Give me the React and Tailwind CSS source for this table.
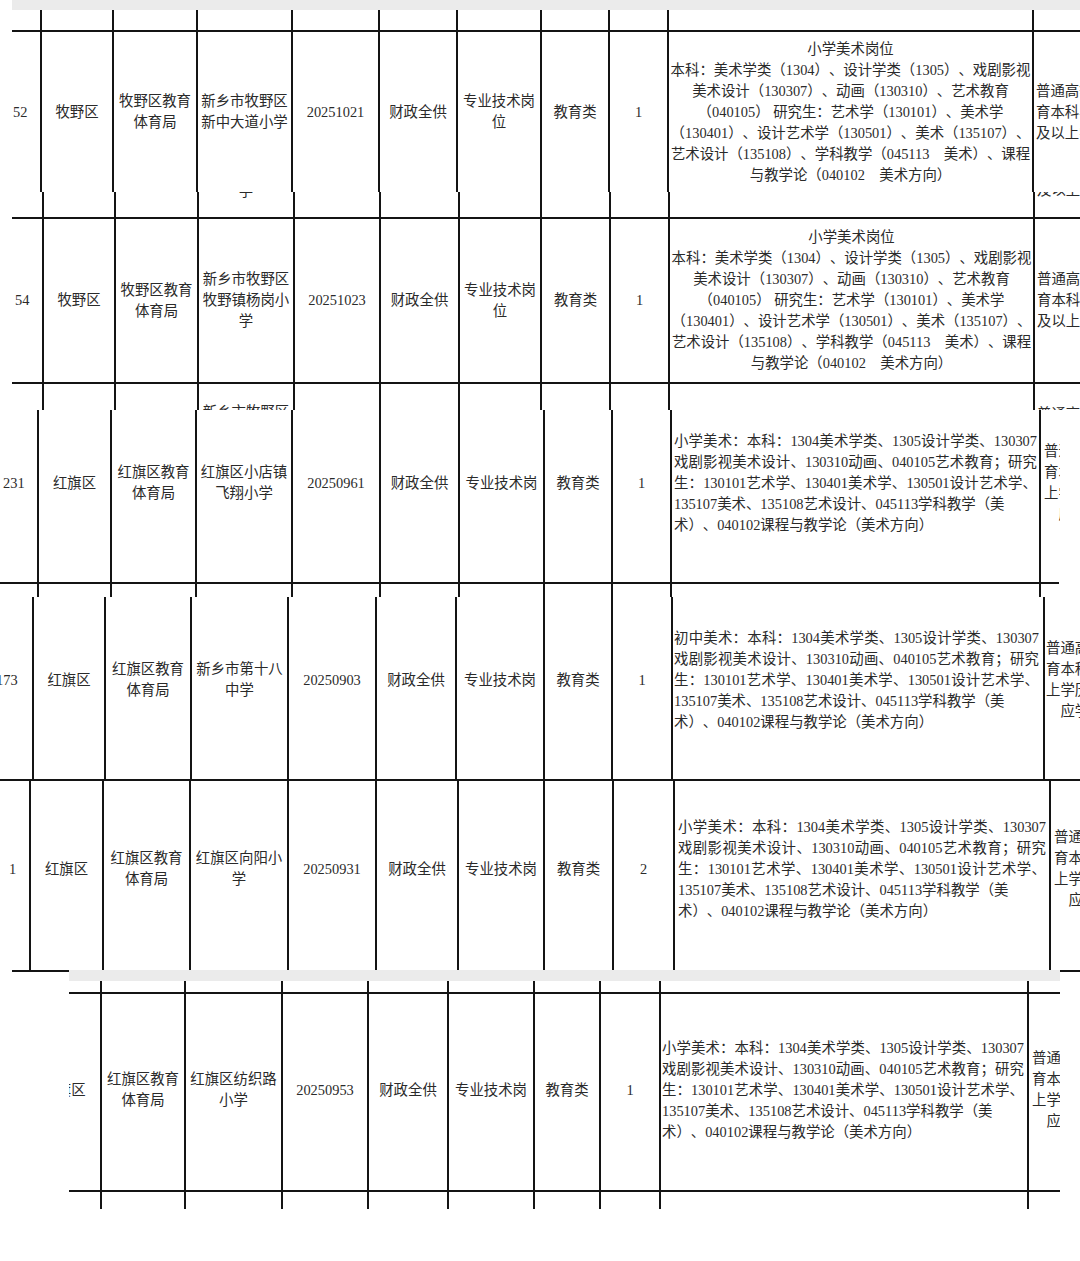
const LINE = "border-[#141414]";
const B = "border-l-2 border-[#141414]";

// column tracks per pasted strip (each strip of the collage is shifted a little)
const C1 = "grid-cols-[28px_72px_84px_95px_87px_78px_84px_68px_59px_365px_100px]";
const C2 = "grid-cols-[30px_72px_83px_96px_86px_79px_82px_69px_59px_365px_100px]";
const C3 = "grid-cols-[37px_73px_85px_96px_88px_79px_85px_68px_59px_369px_100px]";
const C4 = "grid-cols-[32px_72px_86px_97px_88px_80px_88px_68px_60px_372px_100px]";
const C5 = "grid-cols-[17px_73px_87px_98px_88px_82px_86px_69px_61px_376px_100px]";
const C6 = "grid-cols-[72px_84px_97px_86px_80px_86px_66px_60px_368px_100px]";

function HLine({ className = "" }) {
  return <div className={`h-[2px] bg-[#141414] ${className}`} />;
}

function Stubs({ cols, n = 11, className = "", first = false, fill = {} }) {
  return (
    <div className={`grid ${cols} ${className}`}>
      {Array.from({ length: n }).map((_, i) => (
        <div key={i} className={`h-full overflow-hidden ${i === 0 && !first ? "" : B}`}>
          {fill[i]}
        </div>
      ))}
    </div>
  );
}

function Row({ cols, className = "", pb = "", cells, first = false }) {
  return (
    <div className={`grid ${cols} ${className}`}>
      {cells.map((c, i) => (
        <div
          key={i}
          className={`flex items-center ${pb} ${i === 0 && !first ? "" : B} ${
            c.align ?? "justify-center text-center"
          } ${i === 0 ? "" : "overflow-hidden"}`}
        >
          {c.body}
        </div>
      ))}
    </div>
  );
}

function Lines({ lines, className = "" }) {
  return (
    <div className={className}>
      {lines.map((l, i) => (
        <div key={i}>{l}</div>
      ))}
    </div>
  );
}

function DescCenter() {
  const lines = [
    "小学美术岗位",
    "本科：美术学类（1304）、设计学类（1305）、戏剧影视",
    "美术设计（130307）、动画（130310）、艺术教育",
    "（040105） 研究生：艺术学（130101）、美术学",
    "（130401）、设计艺术学（130501）、美术（135107）、",
    "艺术设计（135108）、学科教学（045113　美术）、课程",
    "与教学论（040102　美术方向）",
  ];
  return <Lines lines={lines} className="w-full text-center whitespace-nowrap" />;
}

function DescLeft({ title, w }) {
  const lines = [
    `${title}：本科：1304美术学类、1305设计学类、130307`,
    "戏剧影视美术设计、130310动画、040105艺术教育；研究",
    "生：130101艺术学、130401美术学、130501设计艺术学、",
    "135107美术、135108艺术设计、045113学科教学（美",
    "术）、040102课程与教学论（美术方向）",
  ];
  return (
    <div className={`${w} shrink-0 text-left`}>
      {lines.map((l, i) => (
        <div key={i} className={i < 3 ? "[text-align-last:justify]" : "whitespace-nowrap"}>
          {l}
        </div>
      ))}
    </div>
  );
}

function Right3() {
  return <Lines lines={["普通高等教", "育本科毕业", "及以上学历"]} className="w-[72px] shrink-0 text-center whitespace-nowrap" />;
}

function Right4() {
  return <Lines lines={["普通高等教", "育本科及以", "上学历，相", "应学位"]} className="w-[72px] shrink-0 text-center whitespace-nowrap" />;
}

function cellsMuye({ no, noCls, school, code }) {
  return [
    { body: no, align: `justify-start ${noCls}` },
    { body: "牧野区" },
    { body: <>牧野区教育<br />体育局</> },
    { body: school },
    { body: code },
    { body: "财政全供" },
    { body: <>专业技术岗<br />位</> },
    { body: "教育类" },
    { body: "1" },
    { body: <DescCenter /> },
    { body: <Right3 />, align: "justify-start pl-[2px]" },
  ];
}

function cellsHongqi({ no, noCls, school, code, count = "1", title = "小学美术", descW, descCls, rightCls, skipNo }) {
  const list = [
    { body: no, align: `justify-start whitespace-nowrap ${noCls}` },
    { body: "红旗区" },
    { body: <>红旗区教育<br />体育局</> },
    { body: school },
    { body: code },
    { body: "财政全供" },
    { body: "专业技术岗" },
    { body: "教育类" },
    { body: count },
    { body: <DescLeft title={title} w={descW} />, align: `justify-start ${descCls}` },
    { body: <Right4 />, align: `justify-start ${rightCls}` },
  ];
  return skipNo ? list.slice(1) : list;
}

export default function App() {
  return (
    <div className="w-[1080px] h-[1261px] overflow-hidden bg-white text-[14.4px] leading-[21px] text-[#2a2a2a] [text-spacing-trim:space-all] font-['Liberation_Serif','Noto_Sans_CJK_SC',serif]">
      {/* strip 1 */}
      <div className="ml-[12px] h-[10px] bg-[#ebebeb]" />
      <Stubs cols={C1} className="ml-[12px] h-[20px]" />
      <HLine className="ml-[12px]" />
      <Row
        cols={C1}
        className="ml-[12px] h-[160px]"
        cells={cellsMuye({
          no: "52",
          noCls: "pl-[1px]",
          school: <>新乡市牧野区<br />新中大道小学</>,
          code: "20251021",
        })}
      />
      <Stubs
        cols={C2}
        className="ml-[12px] h-[25px]"
        fill={{
          3: <div className="-mt-[11px] text-center">学</div>,
          10: <div className="-mt-[12px] pl-[2px] whitespace-nowrap">及以上学历</div>,
        }}
      />
      <HLine className="ml-[12px]" />

      {/* strip 2 */}
      <Row
        cols={C2}
        className="ml-[12px] h-[163px]"
        cells={cellsMuye({
          no: "54",
          noCls: "pl-[3px]",
          school: <>新乡市牧野区<br />牧野镇杨岗小<br />学</>,
          code: "20251023",
        })}
      />
      <HLine className="ml-[12px]" />
      <Stubs
        cols={C2}
        className="ml-[12px] h-[26px]"
        fill={{
          3: <div className="mt-[18px] text-center whitespace-nowrap">新乡市牧野区</div>,
          10: <div className="mt-[20px] pl-[2px] whitespace-nowrap">普通高等教</div>,
        }}
      />

      {/* strip 3 */}
      <div className="w-[1060px] overflow-hidden">
        <Row
          cols={C3}
          className="h-[172px]"
          pb="pb-[26px]"
          cells={cellsHongqi({
            no: "231",
            noCls: "pl-[3px]",
            school: <>红旗区小店镇<br />飞翔小学</>,
            code: "20250961",
            descW: "w-[363px]",
            descCls: "pl-[2px]",
            rightCls: "pl-[3px]",
          })}
        />
        <HLine className="w-[1059px]" />
        <Stubs cols={C3} className="h-[13px]" />
      </div>

      {/* strip 4 */}
      <Row
        cols={C4}
        className="h-[182px]"
        pb="pb-[16px]"
        cells={cellsHongqi({
          no: "173",
          noCls: "-ml-[4px]",
          school: <>新乡市第十八<br />中学</>,
          code: "20250903",
          title: "初中美术",
          descW: "w-[365px]",
          descCls: "pl-[1px]",
          rightCls: "pl-[1px]",
        })}
      />
      <HLine />

      {/* strip 5 */}
      <Row
        cols={C5}
        className="ml-[12px] h-[189px]"
        pb="pb-[13px]"
        cells={cellsHongqi({
          no: "1",
          noCls: "-ml-[3px]",
          school: <>红旗区向阳小<br />学</>,
          code: "20250931",
          count: "2",
          descW: "w-[368px]",
          descCls: "pl-[3px]",
          rightCls: "pl-[3px]",
        })}
      />

      {/* strip 6 */}
      <div className="flex items-start">
        <div className={`ml-[12px] w-[57px] h-[11px] border-t-2 ${LINE}`} />
        <div className="w-[991px] overflow-hidden">
          <div className="h-[11px] bg-[#ebebeb]" />
          <Stubs cols={C6} n={10} className="-ml-[41px] h-[11px]" />
          <HLine />
          <Row
            cols={C6}
            className="-ml-[41px] h-[196px]"
            pb="pb-[4px]"
            cells={cellsHongqi({
              skipNo: true,
              school: <>红旗区纺织路<br />小学</>,
              code: "20250953",
              descW: "w-[362px]",
              descCls: "pl-[1px]",
              rightCls: "pl-[3px]",
            })}
          />
          <HLine />
          <Stubs cols={C6} n={10} className="-ml-[41px] h-[17px]" />
        </div>
        <div className={`w-[20px] h-[11px] border-t-2 ${LINE}`} />
      </div>
    </div>
  );
}
